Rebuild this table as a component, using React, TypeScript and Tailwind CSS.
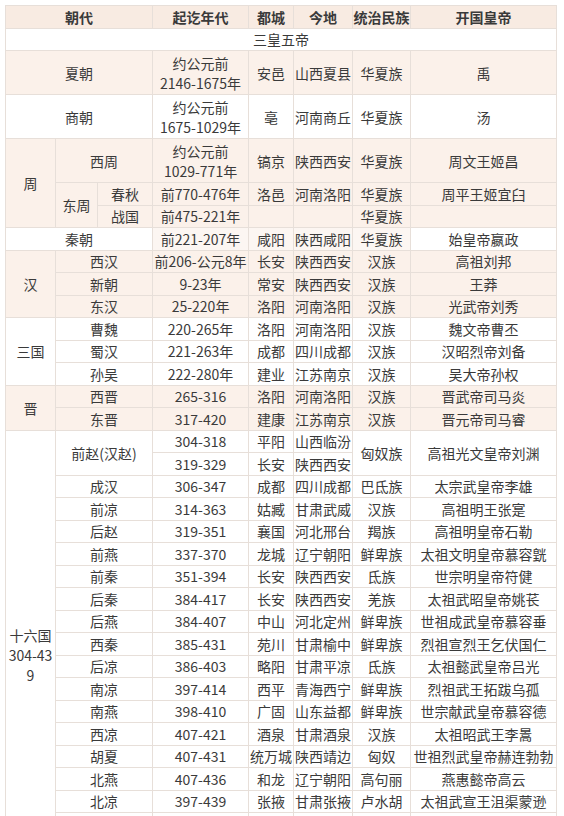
const BEIGE = "bg-[#fbf1ea]"
const HEAD = "bg-[#f8ebe2]"
const WHITE = "bg-white"
const QIN = "bg-[#fcf6f2]"

type Cell = {t?: React.ReactNode; cs?: number; rs?: number; bg?: string; bold?: boolean; tall?: boolean}

function C({t, cs, rs, bg = WHITE, bold, tall}: Cell) {
  return (
    <td
      colSpan={cs}
      rowSpan={rs}
      className={`${bg} ${bold ? "font-bold" : ""} ${tall ? "h-[44px]" : "h-[22.5px]"} border border-[#e7dfd9] px-0 py-0 text-center align-middle leading-[20px] whitespace-nowrap`}
    >
      {t}
    </td>
  )
}

// 十六国 rows: [name, years, capital, place, people, founder]
const sixteen: string[][] = [
  ["成汉", "306-347", "成都", "四川成都", "巴氐族", "太宗武皇帝李雄"],
  ["前凉", "314-363", "姑臧", "甘肃武威", "汉族", "高祖明王张寔"],
  ["后赵", "319-351", "襄国", "河北邢台", "羯族", "高祖明皇帝石勒"],
  ["前燕", "337-370", "龙城", "辽宁朝阳", "鲜卑族", "太祖文明皇帝慕容皝"],
  ["前秦", "351-394", "长安", "陕西西安", "氐族", "世宗明皇帝符健"],
  ["后秦", "384-417", "长安", "陕西西安", "羌族", "太祖武昭皇帝姚苌"],
  ["后燕", "384-407", "中山", "河北定州", "鲜卑族", "世祖成武皇帝慕容垂"],
  ["西秦", "385-431", "苑川", "甘肃榆中", "鲜卑族", "烈祖宣烈王乞伏国仁"],
  ["后凉", "386-403", "略阳", "甘肃平凉", "氐族", "太祖懿武皇帝吕光"],
  ["南凉", "397-414", "西平", "青海西宁", "鲜卑族", "烈祖武王拓跋乌孤"],
  ["南燕", "398-410", "广固", "山东益都", "鲜卑族", "世宗献武皇帝慕容德"],
  ["西凉", "407-421", "酒泉", "甘肃酒泉", "汉族", "太祖昭武王李暠"],
  ["胡夏", "407-431", "统万城", "陕西靖边", "匈奴", "世祖烈武皇帝赫连勃勃"],
  ["北燕", "407-436", "和龙", "辽宁朝阳", "高句丽", "燕惠懿帝高云"],
  ["北凉", "397-439", "张掖", "甘肃张掖", "卢水胡", "太祖武宣王沮渠蒙逊"],
]

// rows below the fold: only their top border shows in the screenshot
const hidden = 3

function Group({label, rows, bg}: {label: string; rows: string[][]; bg: string}) {
  return (
    <>
      {rows.map((r, i) => (
        <tr key={r[0]}>
          {i === 0 && <C t={label} rs={rows.length} bg={bg} />}
          <C t={r[0]} cs={2} bg={bg} />
          <C t={r[1]} bg={bg} />
          <C t={r[2]} bg={bg} />
          <C t={r[3]} bg={bg} />
          <C t={r[4]} bg={bg} />
          <C t={r[5]} bg={bg} />
        </tr>
      ))}
    </>
  )
}

export default function App() {
  return (
    <div className="w-[564px] h-[816px] overflow-hidden bg-white pt-[5px] pl-[5px]">
      <table
        className="table-fixed border-collapse w-[551px] text-[14px] text-[#3a3a3a]"
        style={{fontFamily: '"Noto Sans CJK SC", "Noto Sans", sans-serif'}}
      >
        <colgroup>
          <col className="w-[50px]" />
          <col className="w-[42px]" />
          <col className="w-[55px]" />
          <col className="w-[96px]" />
          <col className="w-[45px]" />
          <col className="w-[59px]" />
          <col className="w-[58px]" />
          <col className="w-[146px]" />
        </colgroup>
        <tbody>
          <tr>
            <C t="朝代" cs={3} bg={HEAD} bold />
            <C t="起讫年代" bg={HEAD} bold />
            <C t="都城" bg={HEAD} bold />
            <C t="今地" bg={HEAD} bold />
            <C t="统治民族" bg={HEAD} bold />
            <C t="开国皇帝" bg={HEAD} bold />
          </tr>
          <tr>
            <C t="三皇五帝" cs={8} />
          </tr>
          <tr>
            <C t="夏朝" cs={3} bg={BEIGE} tall />
            <C t={<>约公元前<br />2146-1675年</>} bg={BEIGE} tall />
            <C t="安邑" bg={BEIGE} tall />
            <C t="山西夏县" bg={BEIGE} tall />
            <C t="华夏族" bg={BEIGE} tall />
            <C t="禹" bg={BEIGE} tall />
          </tr>
          <tr>
            <C t="商朝" cs={3} tall />
            <C t={<>约公元前<br />1675-1029年</>} tall />
            <C t="亳" tall />
            <C t="河南商丘" tall />
            <C t="华夏族" tall />
            <C t="汤" tall />
          </tr>
          <tr>
            <C t="周" rs={3} bg={BEIGE} />
            <C t="西周" cs={2} bg={BEIGE} tall />
            <C t={<>约公元前<br />1029-771年</>} bg={BEIGE} tall />
            <C t="镐京" bg={BEIGE} tall />
            <C t="陕西西安" bg={BEIGE} tall />
            <C t="华夏族" bg={BEIGE} tall />
            <C t="周文王姬昌" bg={BEIGE} tall />
          </tr>
          <tr>
            <C t="东周" rs={2} bg={BEIGE} />
            <C t="春秋" bg={BEIGE} />
            <C t="前770-476年" bg={BEIGE} />
            <C t="洛邑" bg={BEIGE} />
            <C t="河南洛阳" bg={BEIGE} />
            <C t="华夏族" bg={BEIGE} />
            <C t="周平王姬宜臼" bg={BEIGE} />
          </tr>
          <tr>
            <C t="战国" bg={BEIGE} />
            <C t="前475-221年" bg={BEIGE} />
            <C bg={BEIGE} />
            <C bg={BEIGE} />
            <C t="华夏族" bg={BEIGE} />
            <C bg={BEIGE} />
          </tr>
          <tr>
            <C t="秦朝" cs={3} />
            <C t="前221-207年" bg={QIN} />
            <C t="咸阳" bg={QIN} />
            <C t="陕西咸阳" bg={QIN} />
            <C t="华夏族" bg={QIN} />
            <C t="始皇帝嬴政" />
          </tr>
          <Group
            label="汉"
            bg={BEIGE}
            rows={[
              ["西汉", "前206-公元8年", "长安", "陕西西安", "汉族", "高祖刘邦"],
              ["新朝", "9-23年", "常安", "陕西西安", "汉族", "王莽"],
              ["东汉", "25-220年", "洛阳", "河南洛阳", "汉族", "光武帝刘秀"],
            ]}
          />
          <Group
            label="三国"
            bg={WHITE}
            rows={[
              ["曹魏", "220-265年", "洛阳", "河南洛阳", "汉族", "魏文帝曹丕"],
              ["蜀汉", "221-263年", "成都", "四川成都", "汉族", "汉昭烈帝刘备"],
              ["孙吴", "222-280年", "建业", "江苏南京", "汉族", "吴大帝孙权"],
            ]}
          />
          <Group
            label="晋"
            bg={BEIGE}
            rows={[
              ["西晋", "265-316", "洛阳", "河南洛阳", "汉族", "晋武帝司马炎"],
              ["东晋", "317-420", "建康", "江苏南京", "汉族", "晋元帝司马睿"],
            ]}
          />
          <tr>
            <C t={<>十六国<br />304-43<br />9</>} rs={sixteen.length + 2 + hidden} />
            <C t="前赵(汉赵)" cs={2} rs={2} />
            <C t="304-318" />
            <C t="平阳" />
            <C t="山西临汾" />
            <C t="匈奴族" rs={2} />
            <C t="高祖光文皇帝刘渊" rs={2} />
          </tr>
          <tr>
            <C t="319-329" />
            <C t="长安" />
            <C t="陕西西安" />
          </tr>
          {sixteen.map((r) => (
            <tr key={r[0]}>
              <C t={r[0]} cs={2} />
              <C t={r[1]} />
              <C t={r[2]} />
              <C t={r[3]} />
              <C t={r[4]} />
              <C t={r[5]} />
            </tr>
          ))}
          {Array.from({length: hidden}, (_, i) => (
            <tr key={"h" + i}>
              <C cs={2} />
              <C />
              <C />
              <C />
              <C />
              <C />
            </tr>
          ))}
        </tbody>
      </table>
    </div>
  )
}
